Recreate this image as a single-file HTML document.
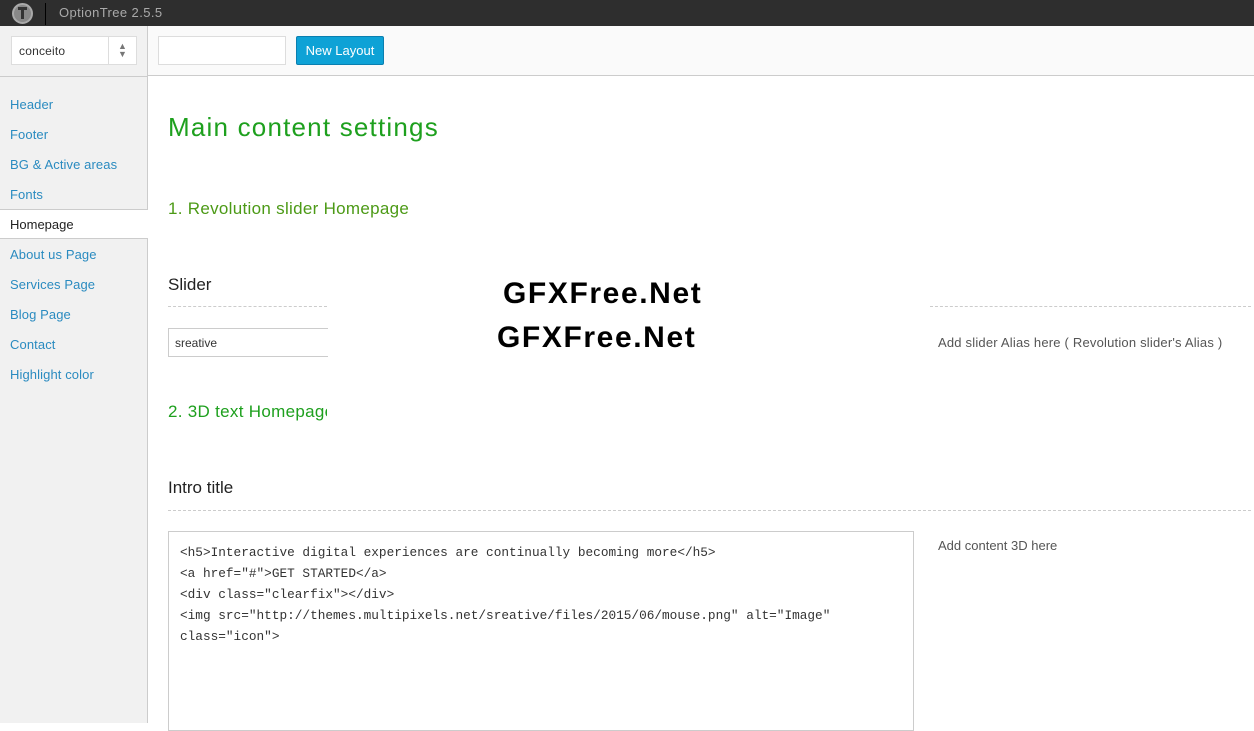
<!DOCTYPE html>
<html><head><style>
*{margin:0;padding:0;box-sizing:border-box}
body{width:1254px;height:723px;overflow:hidden;background:#fff;font-family:"Liberation Sans",sans-serif;position:relative;font-size:13px;color:#333}
.a{position:absolute}
.top{left:0;top:0;width:1254px;height:26px;background:#2e2e2e}
.side{left:0;top:26px;width:148px;height:697px;background:#f1f1f1;border-right:1px solid #ccc}
.nav{left:10px;font-size:13px;color:#2a8bc0;letter-spacing:0.1px}
.wm{font-family:"Liberation Sans",sans-serif;font-weight:bold;font-size:30px;color:#000;letter-spacing:1.6px}
.dash{height:0;border-top:1px dashed #ccc}
pre{font-family:"Liberation Mono",monospace;font-size:12.75px;line-height:21px;color:#333}
</style></head><body>
<div class="a top"></div>
<div class="a" style="left:12px;top:3px;width:21px;height:21px;border-radius:50%;background:#888;border:2px solid #aaa"></div>
<div class="a" style="left:18px;top:7px;width:9px;height:3px;background:#333"></div>
<div class="a" style="left:21px;top:9px;width:3px;height:10px;background:#333"></div>
<div class="a" style="left:45px;top:3px;width:1px;height:22px;background:#000"></div>
<div class="a" style="left:59px;top:5px;color:#aaa;font-size:13px;letter-spacing:0.4px">OptionTree 2.5.5</div>
<div class="a" style="left:0;top:26px;width:1254px;height:50px;background:#fafafa;border-bottom:1px solid #ccc"></div>
<div class="a side"></div>
<div class="a" style="left:147px;top:26px;width:1px;height:50px;background:#ccc"></div>
<div class="a" style="left:11px;top:36px;width:126px;height:29px;background:#fff;border:1px solid #ddd"></div>
<div class="a" style="left:108px;top:36px;width:1px;height:29px;background:#ddd"></div>
<div class="a" style="left:19px;top:44px;font-size:12px;letter-spacing:0.2px">conceito</div>
<div class="a" style="left:118px;top:42px;font-size:9px;color:#777;line-height:8px">▲<br>▼</div>
<div class="a" style="left:158px;top:36px;width:128px;height:29px;background:#fff;border:1px solid #ddd"></div>
<div class="a" style="left:296px;top:36px;width:88px;height:29px;background:#0ea2d6;border:1px solid #0a7fb0;border-radius:2px;color:#fff;font-size:13px;text-align:center;line-height:27px">New Layout</div>
<div class="a" style="left:0;top:76px;width:148px;height:1px;background:#ccc"></div>
<div class="a nav" style="top:97px">Header</div>
<div class="a nav" style="top:127px">Footer</div>
<div class="a nav" style="top:157px">BG &amp; Active areas</div>
<div class="a nav" style="top:187px">Fonts</div>
<div class="a" style="left:0;top:209px;width:148px;height:30px;background:#fff;border-top:1px solid #ccc;border-bottom:1px solid #ccc"></div>
<div class="a" style="left:10px;top:217px;color:#222">Homepage</div>
<div class="a nav" style="top:247px">About us Page</div>
<div class="a nav" style="top:277px">Services Page</div>
<div class="a nav" style="top:307px">Blog Page</div>
<div class="a nav" style="top:337px">Contact</div>
<div class="a nav" style="top:367px">Highlight color</div>
<div class="a" style="left:168px;top:112px;font-size:26px;color:#1ea01e;letter-spacing:1.2px">Main content settings</div>
<div class="a" style="left:168px;top:199px;font-size:17px;color:#4c9a16;letter-spacing:0.3px">1. Revolution slider Homepage</div>
<div class="a" style="left:168px;top:275px;font-size:17px;color:#222">Slider</div>
<div class="a dash" style="left:168px;top:306px;width:159px"></div>
<div class="a dash" style="left:930px;top:306px;width:321px"></div>
<div class="a" style="left:168px;top:328px;width:160px;height:29px;border:1px solid #ccc;border-right:none"></div>
<div class="a" style="left:175px;top:336px;font-size:12px">sreative</div>
<div class="a" style="left:938px;top:335px;font-size:13px;color:#555;letter-spacing:0.2px">Add slider Alias here ( Revolution slider's Alias )</div>
<div class="a" style="left:168px;top:402px;width:159px;height:24px;overflow:hidden;font-size:17px;color:#1ea01e;white-space:nowrap;letter-spacing:0.3px">2. 3D text Homepage</div>
<div class="a wm" style="left:503px;top:277px">GFXFree.Net</div>
<div class="a wm" style="left:497px;top:321px;height:28px;overflow:hidden">GFXFree.Net</div>
<div class="a" style="left:168px;top:478px;font-size:17px;color:#222">Intro title</div>
<div class="a dash" style="left:168px;top:510px;width:1083px"></div>
<div class="a" style="left:168px;top:531px;width:746px;height:200px;border:1px solid #ccc"></div>
<pre class="a" style="left:180px;top:542px">&lt;h5&gt;Interactive digital experiences are continually becoming more&lt;/h5&gt;
&lt;a href="#"&gt;GET STARTED&lt;/a&gt;
&lt;div class="clearfix"&gt;&lt;/div&gt;
&lt;img src="http://themes.multipixels.net/sreative/files/2015/06/mouse.png" alt="Image"
class="icon"&gt;</pre>
<div class="a" style="left:938px;top:538px;font-size:13px;color:#555">Add content 3D here</div>
</body></html>
